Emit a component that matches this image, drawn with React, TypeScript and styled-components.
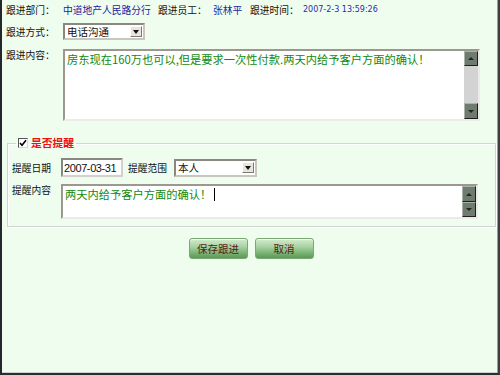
import React from "react";
import styled, { createGlobalStyle } from "styled-components";

const Global = createGlobalStyle`
  html, body { margin: 0; padding: 0; width: 500px; height: 375px; overflow: hidden; background: #effdef; }
  body { font-family: "Noto Sans CJK SC", "DejaVu Sans", sans-serif; }
`;

const Frame = styled.div`
  box-sizing: border-box;
  width: 500px;
  height: 375px;
  background: #effdef;
  border-left: 2px solid #24282d;
  border-right: 2px solid #3b3f44;
  border-bottom: 2px solid #2a2e33;
  box-shadow: inset -1px 0 0 #9c9c9c, inset 0 -1px 0 #cfcfcf;
  padding: 0 0 0 4px;
  display: flex;
  flex-direction: column;
  color: #111;
`;

const InfoRow = styled.div`
  display: flex;
  align-items: center;
  height: 19px;
`;

const Label = styled.span<{ $w: number; $pl?: number }>`
  box-sizing: border-box;
  width: ${(p) => p.$w}px;
  padding-left: ${(p) => p.$pl || 0}px;
  flex: none;
  white-space: nowrap;
  font-size: 9.75px;
  line-height: 12px;
  color: #111;
`;

const Value = styled.span<{ $w: number }>`
  width: ${(p) => p.$w}px;
  flex: none;
  white-space: nowrap;
  font-size: 9.75px;
  line-height: 12px;
  color: #1e1ea0;
`;

const Stamp = styled.span`
  font-family: "DejaVu Sans", sans-serif;
  font-size: 8px;
  color: #2a2ab4;
  white-space: nowrap;
`;

const FieldRow = styled.div<{ $mt: number; $align?: string }>`
  display: flex;
  align-items: ${(p) => p.$align || "center"};
  margin-top: ${(p) => p.$mt}px;
`;

const SelectBox = styled.div<{ $w: number; $h: number }>`
  box-sizing: border-box;
  width: ${(p) => p.$w}px;
  height: ${(p) => p.$h}px;
  border: 2px solid;
  border-color: #8a8781 #c9c6bf #c9c6bf #8a8781;
  background: #fff;
  display: flex;
  align-items: center;
  justify-content: space-between;
  flex: none;
`;

const SelectText = styled.span`
  padding-left: 2px;
  font-size: 10.5px;
  line-height: 12px;
  color: #111;
  white-space: nowrap;
`;

const ArrowBtn = styled.span`
  box-sizing: border-box;
  width: 12px;
  height: 11px;
  margin-right: 1px;
  background: #e8e5dd;
  border: 1px solid;
  border-color: #fff #7e7b74 #7e7b74 #fff;
  display: flex;
  align-items: center;
  justify-content: center;
  &::after {
    content: "";
    border-left: 3px solid transparent;
    border-right: 3px solid transparent;
    border-top: 4px solid #111;
  }
`;

const TextBox = styled.div<{ $w: number; $h: number }>`
  box-sizing: border-box;
  width: ${(p) => p.$w}px;
  height: ${(p) => p.$h}px;
  border: 2px solid;
  border-color: #9c9890 #ecebe8 #ecebe8 #9c9890;
  background: #fff;
  display: flex;
  flex: none;
`;

const TextContent = styled.div`
  flex: 1;
  padding: 1px 2px;
  font-size: 11.25px;
  line-height: 14px;
  color: #0e8a0e;
  white-space: nowrap;
  overflow: hidden;
`;

const Caret = styled.span`
  display: inline-block;
  width: 1px;
  height: 13px;
  margin-left: 3px;
  vertical-align: -2px;
  background: #000;
`;

const ScrollBar = styled.div<{ $track: string }>`
  width: 14px;
  flex: none;
  display: flex;
  flex-direction: column;
  background: ${(p) => p.$track};
`;

const ScrollBtn = styled.div<{ $dir: "up" | "down"; $h: number }>`
  box-sizing: border-box;
  height: ${(p) => p.$h}px;
  background: #6f7b6f;
  border: 1px solid;
  border-color: #a9b3a9 #1c201c #1c201c #a9b3a9;
  display: flex;
  align-items: center;
  justify-content: center;
  flex: none;
  &::after {
    content: "";
    border-left: 3px solid transparent;
    border-right: 3px solid transparent;
    ${(p) =>
      p.$dir === "up"
        ? "border-bottom: 3px solid #1e241e;"
        : "border-top: 3px solid #1e241e;"}
  }
`;

const Track = styled.div`
  flex: 1;
`;

const Fieldset = styled.fieldset`
  box-sizing: border-box;
  width: 489px;
  margin: 15px 0 0 1px;
  padding: 8px 0 7px 4px;
  border: 1px solid #d2d4d2;
  box-shadow: inset 1px 1px 0 #fff, 1px 1px 0 #fff;
  min-width: 0;
`;

const Legend = styled.legend`
  display: flex;
  align-items: center;
  gap: 3px;
  height: 14px;
  padding: 0 2px;
  margin-left: 4px;
`;

const CheckBox = styled.span`
  box-sizing: border-box;
  width: 10px;
  height: 10px;
  border: 1px solid;
  border-color: #555 #d8d8d8 #d8d8d8 #555;
  background: #fff;
  display: flex;
  align-items: center;
  justify-content: center;
`;

const LegendText = styled.span`
  font-size: 10.75px;
  font-weight: bold;
  color: #ee1111;
  line-height: 12px;
`;

const DateInput = styled.div`
  box-sizing: border-box;
  width: 62px;
  height: 19px;
  border: 2px solid;
  border-color: #8a8781 #d4d1ca #d4d1ca #8a8781;
  background: #fff;
  display: flex;
  align-items: center;
  padding-left: 1px;
  font-family: "Liberation Sans", sans-serif;
  font-size: 11px;
  letter-spacing: -0.4px;
  color: #111;
  flex: none;
`;

const ButtonRow = styled.div`
  display: flex;
  justify-content: center;
  gap: 7px;
  margin-top: 11px;
  padding-right: 2px;
`;

const Button = styled.button`
  box-sizing: border-box;
  width: 59px;
  height: 21px;
  padding: 0;
  border: 1px solid #79a874;
  border-radius: 3px;
  background: linear-gradient(#d3ebcd 0%, #aad3a3 40%, #7fb679 70%, #5c9856 100%);
  box-shadow: inset 0 1px 0 #eef8ea;
  font-family: "Noto Sans CJK SC", sans-serif;
  font-size: 10.5px;
  color: #5a1a10;
  line-height: 12px;
`;

function ScrollTall() {
  return (
    <ScrollBar $track="#d3d3d3">
      <ScrollBtn $dir="up" $h={15} />
      <Track />
      <ScrollBtn $dir="down" $h={16} />
    </ScrollBar>
  );
}

function ScrollShort() {
  return (
    <ScrollBar $track="#ecebe8">
      <ScrollBtn $dir="up" $h={16} />
      <Track />
      <ScrollBtn $dir="down" $h={15} />
    </ScrollBar>
  );
}

export default function App() {
  return (
    <>
      <Global />
      <Frame>
        <InfoRow>
          <Label $w={57}>跟进部门：</Label>
          <Value $w={95}>中道地产人民路分行</Value>
          <Label $w={55}>跟进员工：</Label>
          <Value $w={37}>张林平</Value>
          <Label $w={53}>跟进时间：</Label>
          <Stamp>2007-2-3 13:59:26</Stamp>
        </InfoRow>

        <FieldRow $mt={4}>
          <Label $w={57}>跟进方式：</Label>
          <SelectBox $w={82} $h={17}>
            <SelectText>电话沟通</SelectText>
            <ArrowBtn />
          </SelectBox>
        </FieldRow>

        <FieldRow $mt={9} $align="flex-start">
          <Label $w={57}>跟进内容：</Label>
          <TextBox $w={417} $h={72}>
            <TextContent>
              房东现在160万也可以,但是要求一次性付款.两天内给予客户方面的确认！
            </TextContent>
            <ScrollTall />
          </TextBox>
        </FieldRow>

        <Fieldset>
          <Legend>
            <CheckBox>
              <svg width="8" height="8" viewBox="0 0 8 8">
                <path d="M1 4 L3 6.2 L7 1.2" fill="none" stroke="#000" strokeWidth="1.6" />
              </svg>
            </CheckBox>
            <LegendText>是否提醒</LegendText>
          </Legend>

          <FieldRow $mt={0}>
            <Label $w={49}>提醒日期</Label>
            <DateInput>2007-03-31</DateInput>
            <Label $w={51} $pl={5}>
              提醒范围
            </Label>
            <SelectBox $w={83} $h={18}>
              <SelectText>本人</SelectText>
              <ArrowBtn />
            </SelectBox>
          </FieldRow>

          <FieldRow $mt={7} $align="flex-start">
            <Label $w={49}>提醒内容</Label>
            <TextBox $w={417} $h={35}>
              <TextContent>
                两天内给予客户方面的确认！<Caret />
              </TextContent>
              <ScrollShort />
            </TextBox>
          </FieldRow>
        </Fieldset>

        <ButtonRow>
          <Button>保存跟进</Button>
          <Button>取消</Button>
        </ButtonRow>
      </Frame>
    </>
  );
}
